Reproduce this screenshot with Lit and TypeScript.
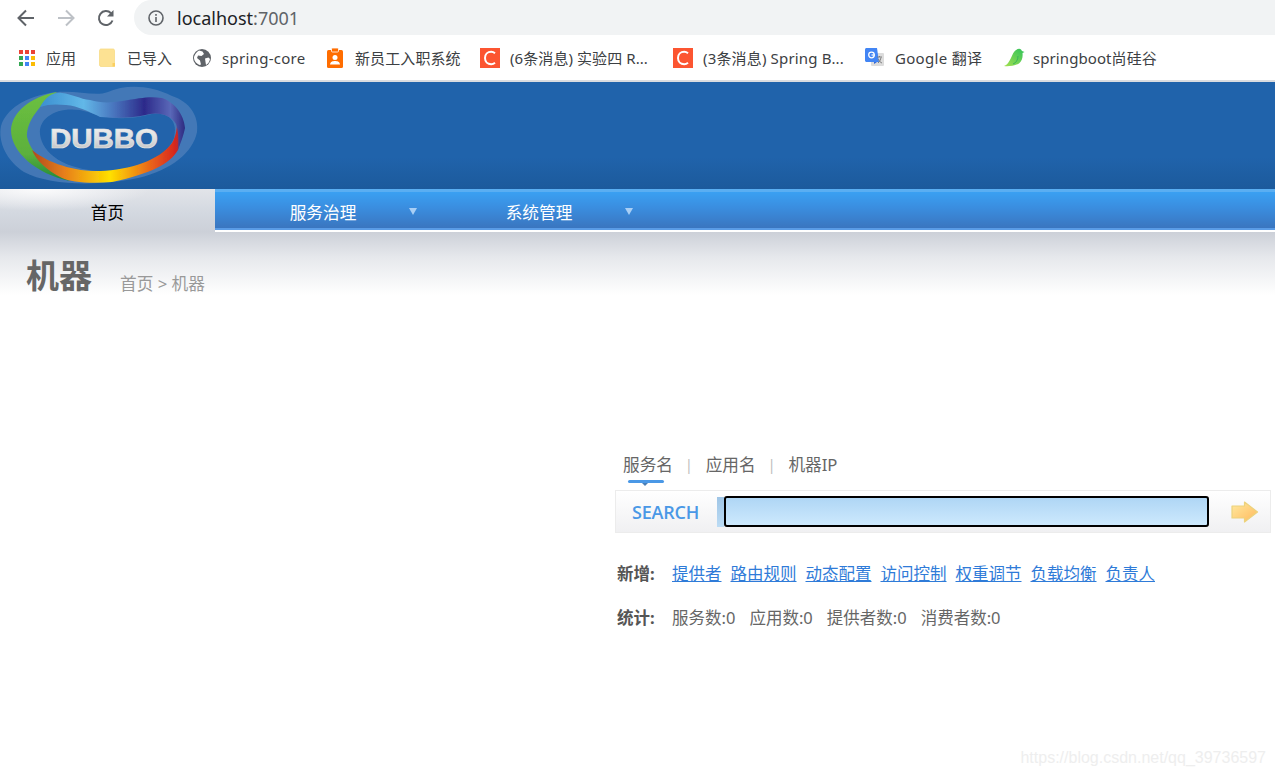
import { LitElement, html, css, svg } from "lit";
import { customElement } from "lit/decorators.js";

const bookmarks: { icon: string; label: string; w: number; iw: number; ls: number }[] = [
  { icon: "apps", label: "应用", w: 81, iw: 28, ls: 0 },
  { icon: "folder", label: "已导入", w: 94, iw: 28, ls: 0 },
  { icon: "globe", label: "spring-core", w: 134, iw: 29, ls: 0.28 },
  { icon: "badge", label: "新员工入职系统", w: 153, iw: 28, ls: 0.1 },
  { icon: "csdn", label: "(6条消息) 实验四 R...", w: 193, iw: 30, ls: 0.08 },
  { icon: "csdn", label: "(3条消息) Spring B...", w: 192, iw: 30, ls: 0.16 },
  { icon: "gt", label: "Google 翻译", w: 139, iw: 30, ls: 0.3 },
  { icon: "leaf", label: "springboot尚硅谷", w: 170, iw: 29, ls: 0.08 },
];

const icons: Record<string, unknown> = {
  apps: svg`<svg width="18" height="18" viewBox="0 0 18 18">
    <rect x="1" y="1" width="4" height="4" fill="#ea4335"/><rect x="7" y="1" width="4" height="4" fill="#ea4335"/><rect x="13" y="1" width="4" height="4" fill="#ea4335"/>
    <rect x="1" y="7" width="4" height="4" fill="#34a853"/><rect x="7" y="7" width="4" height="4" fill="#4285f4"/><rect x="13" y="7" width="4" height="4" fill="#fbbc05"/>
    <rect x="1" y="13" width="4" height="4" fill="#34a853"/><rect x="7" y="13" width="4" height="4" fill="#4285f4"/><rect x="13" y="13" width="4" height="4" fill="#fbbc05"/></svg>`,
  folder: svg`<svg width="18" height="20" viewBox="0 0 18 20"><path d="M0.500 2.500C.5 1.700 1.200 1 2 1H14C15 1 15.500 1.700 15.500 2.500V18.500H2C1.200 18.500 .5 17.800 .5 17Z" fill="#fde293" stroke="#f8dc86" stroke-width=".8"/><rect x="13.500" y="15" width="2.500" height="3.500" fill="#fbcf60"/></svg>`,
  globe: svg`<svg width="18" height="18" viewBox="0 0 18 18"><circle cx="9" cy="9" r="9" fill="#5f6368"/><path d="M6 1.500 9.500 2.500 11 5 8.500 7 5 6.500 4 9 7 11.500 8 15.500 6.500 16C3 14.500 .8 11.500 1 8 2 5 3.500 3 6 1.500ZM12 9.500 15.500 8.500 17 10C16.500 13 15 15 13 16L12.500 13Z" fill="#fff"/></svg>`,
  badge: svg`<svg width="17" height="20" viewBox="0 0 17 20"><rect x="0" y="2" width="16" height="18" rx="1.500" fill="#ff6d00"/><rect x="4.500" y="0" width="7" height="4" rx="1" fill="#ff6d00" stroke="#fff" stroke-width=".8"/><circle cx="8" cy="9.500" r="2.500" fill="#fff"/><path d="M3 16.500C3.500 13.500 5.500 13 8 13S12.500 13.500 13 16.500Z" fill="#fff"/></svg>`,
  csdn: svg`<svg width="20" height="20" viewBox="0 0 20 20"><rect width="20" height="20" fill="#fc5531"/><path d="M15 5.200C13.800 4.200 12.500 3.800 11.200 3.800 7.700 3.800 5 6.300 5 10S7.700 16.200 11.200 16.200C12.500 16.200 13.800 15.800 15 14.800" fill="none" stroke="#fff" stroke-width="2"/></svg>`,
  gt: svg`<svg width="20" height="20" viewBox="0 0 20 20"><rect x="6" y="5" width="13" height="13" rx="1" fill="#dcdcdc"/><path d="M1.500 0H12L14 14H1.500C.7 14 0 13.300 0 12.500V1.500C0 .7 .7 0 1.500 0Z" fill="#4285f4"/><path d="M9 16 12 14 9 14Z" fill="#3367d6"/><circle cx="6.500" cy="7" r="2.800" fill="none" stroke="#fff" stroke-width="1.300"/><path d="M6.500 7H9.500" stroke="#fff" stroke-width="1.200"/><path d="M12 9H17M14.500 8V9M13 15C15 13.500 15.500 11.500 16 9.500M13.500 11C14 13 15.500 14.500 17 15" stroke="#777" stroke-width=".9" fill="none"/></svg>`,
  leaf: svg`<svg width="21" height="19" viewBox="0 0 21 19"><defs><linearGradient id="lf" x1="0" y1="1" x2="1" y2="0"><stop offset="0" stop-color="#a4e050"/><stop offset="1" stop-color="#2fc25b"/></linearGradient></defs><path d="M0 18C3 17 5 14 7 10 8.500 6.500 10 3 12 2 14 .5 16 .5 17 1.500L18 3 20.500 4 18.500 5C19 9 18 13 15 15.500 10 18 4 18.500 0 18Z" fill="url(#lf)"/><path d="M9 16C12 15 14 12 14 8" stroke="#3ab55c" fill="none" stroke-width="1"/></svg>`,
};

@customElement("app-root")
export class AppRoot extends LitElement {
  static styles = css`
    :host {
      display: block;
      height: 777px;
      overflow: hidden;
      position: relative;
      background: #fff;
      font-family: "Noto Sans", "Noto Sans CJK SC", sans-serif;
      color: #666;
    }
    .chrome {
      display: flex;
      align-items: center;
      height: 35px;
      padding-left: 15px;
    }
    .nav-btn { width: 22px; height: 22px; display: block; }
    .nav-btns { display: flex; gap: 18px; width: 119px; flex: none; }
    .omni {
      flex: 1;
      height: 35px;
      background: #f1f3f4;
      border-radius: 18px 0 0 18px;
      display: flex;
      align-items: center;
      padding-left: 14px;
      gap: 13px;
      font-size: 18px;
      color: #202124;
    }
    .omni span span { color: #5f6368; }
    .bookmarks {
      display: flex;
      align-items: center;
      height: 45px;
      padding-left: 18px;
      border-bottom: 2px solid #dadce0;
      font-size: 15px;
      color: #3c4043;
    }
    .bm { display: flex; align-items: center; flex: none; white-space: nowrap; }
    .bm-icon { flex: none; display: flex; align-items: center; }
    .bm-icon svg { display: block; }
    .brand {
      height: 107px;
      background: linear-gradient(#2063ab 0, #2063ab 70%, #1c5a9c 100%);
    }
    .logo { display: block; }
    .menu {
      display: flex;
      height: 43px;
      background: linear-gradient(#3aa0f2 0, #3a8ee0 40%, #3a73bc 100%);
      border-top: 3px solid #5aaef2;
      border-bottom: 2px solid #fff;
      box-sizing: border-box;
      box-shadow: inset 0 -2px 0 #5a9ce6;
      font-size: 16.67px;
      color: #fff;
    }
    .tab {
      width: 216px;
      display: flex;
      align-items: center;
      justify-content: center;
      position: relative;
      padding-top: 2px;
      box-sizing: border-box;
    }
    .tab.active {
      width: 215px;
      color: #000;
      margin-top: -3px;
      margin-bottom: -2px;
      padding-top: 3px;
      background: radial-gradient(ellipse 110px 22px at 40px 0, #fbfbfc 0, rgba(251, 251, 252, 0) 100%), linear-gradient(#e2e4e9 0, #d3d8e0 55%, #ccd0d8 100%);
    }
    .caret {
      position: absolute;
      right: 14px;
      top: 16px;
      width: 0;
      height: 0;
      border-left: 4px solid transparent;
      border-right: 4px solid transparent;
      border-top: 7px solid #a9cff5;
    }
    .title-band {
      height: 63px;
      background: linear-gradient(#ccd0d8 0, #e6e8ec 40%, #fff 100%);
      display: flex;
      align-items: flex-end;
      padding-left: 26px;
      box-sizing: border-box;
    }
    h1 {
      margin: 0;
      font-size: 33px;
      line-height: 38px;
      font-weight: 700;
      color: #666;
      width: 94px;
      flex: none;
    }
    .crumb { font-size: 16.67px; line-height: 22px; color: #999; }
    .search {
      margin-left: 615px;
      padding-top: 154px;
      width: 656px;
      font-size: 16.67px;
    }
    .types { display: flex; align-items: center; padding-left: 8px; height: 30px; color: #666; }
    .types .sep { color: #bbb; font-size: 14px; margin: 0 13px 0 12px; }
    .types .t { position: relative; }
    .t.on::after {
      content: "";
      position: absolute;
      left: 5px;
      right: 9px;
      top: 28px;
      height: 3px;
      border-radius: 2px;
      background: #4a98e6;
    }
    .t.on::before {
      content: "";
      position: absolute;
      left: 19px;
      top: 31px;
      border-left: 3px solid transparent;
      border-right: 3px solid transparent;
      border-top: 3px solid #4a7fb5;
    }
    .bar {
      margin-top: 11px;
      height: 43px;
      box-sizing: border-box;
      border: 1px solid #ececec;
      background: linear-gradient(#fff 0, #f0f0f2 100%);
      display: flex;
      align-items: center;
    }
    .lbl {
      width: 99px;
      margin-right: 2px;
      flex: none;
      text-align: center;
      font-weight: 600;
      font-size: 18px;
      color: #4a98e6;
      font-family: "Open Sans", sans-serif;
      letter-spacing: -.2px;
    }
    .notch { width: 7px; height: 30px; background: linear-gradient(#9fc5e6, #bcdcf5); flex: none; }
    .input {
      width: 485px;
      height: 31px;
      box-sizing: border-box;
      flex: none;
      border: 2px solid #000;
      border-radius: 3px;
      background: linear-gradient(#afd6f5 0, #cde9fd 100%);
      margin-right: 22px;
    }
    .go { display: block; flex: none; }
    .rows { margin-top: 23px; font-size: 16.5px; }
    .row { display: flex; height: 44px; padding-left: 2px; line-height: 36px; color: #666; }
    .row b { width: 55px; flex: none; color: #555; }
    .row .items { display: flex; gap: 9px; }
    .row .items.stats { gap: 14px; }
    a { color: #2f7bd8; text-decoration: underline; }
    .wm {
      position: absolute;
      right: 9px;
      top: 749px;
      font: 16px "Liberation Sans", sans-serif;
      color: #eeeeee;
    }
  `;

  render() {
    return html`
      <div class="chrome">
        <div class="nav-btns">
          <svg class="nav-btn" viewBox="0 0 22 22"><path d="M19 11H4M11 3.500 3.500 11 11 18.500" fill="none" stroke="#5f6368" stroke-width="2"/></svg>
          <svg class="nav-btn" viewBox="0 0 22 22"><path d="M3 11H18M11 3.500 18.500 11 11 18.500" fill="none" stroke="#bdc1c6" stroke-width="2"/></svg>
          <svg class="nav-btn" viewBox="0 0 22 22"><path d="M17.500 13.500A7 7 0 1 1 16 6.200" fill="none" stroke="#5f6368" stroke-width="2"/><path d="M18.500 3V9.500H12Z" fill="#5f6368"/></svg>
        </div>
        <div class="omni">
          <svg width="16" height="16" viewBox="0 0 16 16"><circle cx="8" cy="8" r="7" fill="none" stroke="#5f6368" stroke-width="1.600"/><rect x="7.200" y="7" width="1.600" height="5" fill="#5f6368"/><rect x="7.200" y="4" width="1.600" height="1.800" fill="#5f6368"/></svg>
          <span>localhost<span>:7001</span></span>
        </div>
      </div>
      <div class="bookmarks">
        ${bookmarks.map(
          (b) => html`<div class="bm" style="width:${b.w}px"><span class="bm-icon" style="width:${b.iw}px">${icons[b.icon]}</span><span style="letter-spacing:${b.ls}px">${b.label}</span></div>`
        )}
      </div>
      <div class="brand">
        <svg class="logo" width="200" height="107" viewBox="0 0 200 107">
          <defs>
            <linearGradient id="rb" x1="32" y1="0" x2="182" y2="0" gradientUnits="userSpaceOnUse">
              <stop offset="0" stop-color="#b04a20"/><stop offset=".22" stop-color="#e8801a"/><stop offset=".52" stop-color="#ffe000"/><stop offset=".8" stop-color="#e8601a"/><stop offset=".95" stop-color="#d8281c"/><stop offset="1" stop-color="#a02a40"/>
            </linearGradient>
            <linearGradient id="tb" x1="40" y1="0" x2="185" y2="0" gradientUnits="userSpaceOnUse">
              <stop offset="0" stop-color="#3b8fd0"/><stop offset=".3" stop-color="#62b8e8"/><stop offset=".5" stop-color="#4a78c0"/><stop offset=".72" stop-color="#2c2a8a"/><stop offset=".9" stop-color="#5a68b8"/><stop offset="1" stop-color="#2c2a80"/>
            </linearGradient>
            <linearGradient id="gr" x1="0" y1="0" x2="0" y2="1">
              <stop offset="0" stop-color="#6cc040"/><stop offset=".7" stop-color="#5cb03c"/><stop offset="1" stop-color="#1e8a3a"/>
            </linearGradient>
            <linearGradient id="dt" x1="0" y1="0" x2="0" y2="1">
              <stop offset="0" stop-color="#f6f6f6"/><stop offset=".55" stop-color="#dcdcdc"/><stop offset="1" stop-color="#b4b8bc"/>
            </linearGradient>
            <filter id="sf"><feGaussianBlur stdDeviation=".5"/></filter>
          </defs>
          <g filter="url(#sf)">
            <path d="M1 44C6 28 24 14 57 10 76 8 96 15 108 10 126 2 150 3 172 14 190 20 199 34 197 50 193 70 172 88 138 96 100 104 50 104 24 90 6 78-2 60 1 44Z" fill="#4f80bb" opacity=".75"/>
            <path d="M40 52C38 34 62 22 88 30 108 38 130 38 152 32 170 30 178 40 174 56 166 76 140 88 102 89 66 88 42 72 40 52Z" fill="#2063ab"/>
            <path d="M57 10C30 15 12 30 11 48 11 70 36 92 70 99 50 88 32 74 27 55 26 40 40 22 57 10Z" fill="url(#gr)"/>
            <path d="M32 68C44 78 70 90 100 89 130 88 160 78 172 61 176 54 177 47 177 41 181 46 182 56 178 68 170 82 150 92 112 100 90 102 70 100 62 96 46 88 36 78 32 68Z" fill="url(#rb)"/>
            <path d="M40 25C46 14 54 10 62 11 72 12 80 17 90 18 100 21 110 21 122 19 140 16 150 14 162 16 174 20 184 32 185 46 183 56 180 62 178 68 179 56 178 48 176 42 172 34 160 30 150 32 138 35 120 37 100 35 90 30 78 24 66 23 56 22 48 22 40 25Z" fill="url(#tb)"/>
          </g>
          <text x="50" y="66" textLength="108" lengthAdjust="spacingAndGlyphs" font-family="Liberation Sans, sans-serif" font-weight="700" font-size="28" fill="url(#dt)" stroke="#e4e4e4" stroke-width=".7">DUBBO</text>
        </svg>
      </div>
      <div class="menu">
        <div class="tab active">首页</div>
        <div class="tab">服务治理<i class="caret"></i></div>
        <div class="tab">系统管理<i class="caret"></i></div>
      </div>
      <div class="title-band">
        <h1>机器</h1>
        <div class="crumb">首页 &gt; 机器</div>
      </div>
      <div class="search">
        <div class="types">
          <span class="t on">服务名</span><span class="sep">|</span><span class="t">应用名</span><span class="sep">|</span><span class="t">机器IP</span>
        </div>
        <div class="bar">
          <div class="lbl">SEARCH</div>
          <div class="notch"></div>
          <div class="input"></div>
          <svg class="go" width="28" height="22" viewBox="0 0 28 22">
            <defs><linearGradient id="ar" x1="0" y1="0" x2="1" y2="1"><stop offset="0" stop-color="#ffeaa0"/><stop offset="1" stop-color="#ffb85c"/></linearGradient></defs>
            <path d="M1 5H13.500V1L26.500 11 13.500 21V17H1Z" fill="url(#ar)" stroke="#ecd27c" stroke-width="1.200" stroke-linejoin="round"/>
          </svg>
        </div>
        <div class="rows">
          <div class="row"><b>新增:</b><div class="items">
            <a href="#">提供者</a><a href="#">路由规则</a><a href="#">动态配置</a><a href="#">访问控制</a><a href="#">权重调节</a><a href="#">负载均衡</a><a href="#">负责人</a>
          </div></div>
          <div class="row"><b>统计:</b><div class="items stats">
            <span>服务数:0</span><span>应用数:0</span><span>提供者数:0</span><span>消费者数:0</span>
          </div></div>
        </div>
      </div>
      <div class="wm">https://blog.csdn.net/qq_39736597</div>
    `;
  }
}
